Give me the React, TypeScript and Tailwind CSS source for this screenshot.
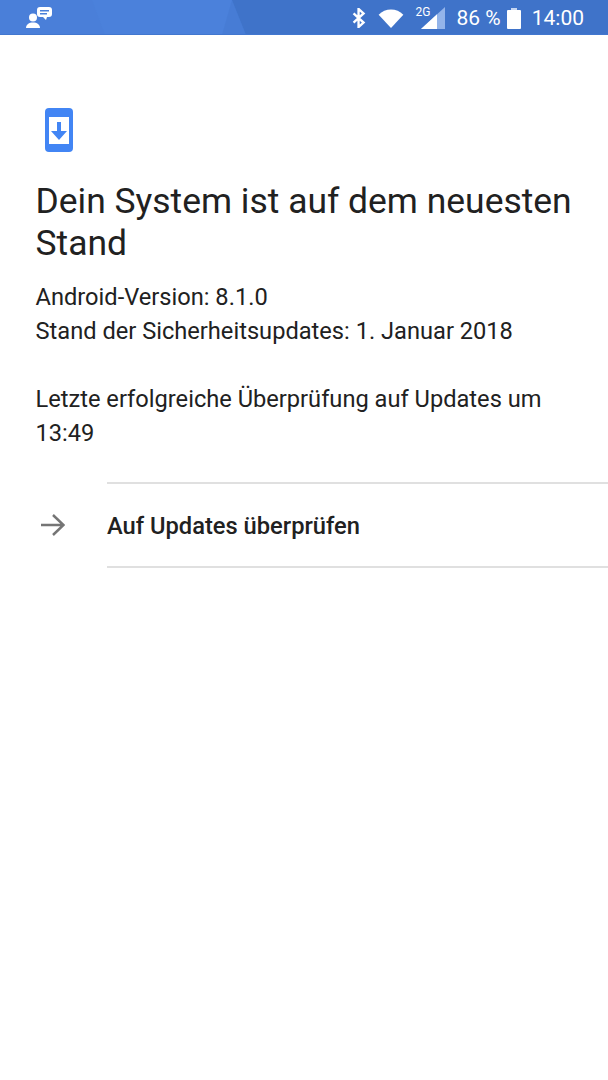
function StatusBar() {
  return (
    <div className="relative flex h-[35px] items-center justify-between overflow-hidden border-b border-[#4277cf] bg-[#4a80da] pl-[26px] pr-[24px]">
      {/* wallpaper facets behind the icons */}
      <svg className="absolute inset-0" width="608" height="35" viewBox="0 0 608 35">
        <polygon points="0,0 92,0 105,35 0,35" fill="#4a7fd9" />
        <polygon points="92,0 232,0 222,35 105,35" fill="#4b81db" />
        <polygon points="232,0 246,35 222,35" fill="#477cd5" />
        <polygon points="232,0 608,0 608,35 246,35" fill="#3f73c9" />
      </svg>
      <svg className="relative" width="26" height="21" viewBox="0 0 26 21" fill="white">
        <circle cx="7" cy="10.500" r="4" />
        <path d="M0 21c0-3.500 3-5.500 7-5.500s7 2 7 5.500z" />
        <path d="M14 0h9a3 3 0 0 1 3 3v4a3 3 0 0 1-3 3h-2l-1 3-3-3h-3a3 3 0 0 1-3-3V3a3 3 0 0 1 3-3z" />
        <rect x="14" y="3" width="9" height="1.500" fill="#4a80da" />
        <rect x="14" y="6" width="7" height="1.500" fill="#4a80da" />
      </svg>
      <div className="relative top-[1px] flex items-center font-['Roboto',sans-serif] text-white">
        <svg width="14" height="20" viewBox="0 0 14 22" fill="none" stroke="white" strokeWidth="2.600">
          <path d="M1 6l11 10-5.500 5V1L12 6 1 16" />
        </svg>
        <svg className="ml-[12px]" width="26" height="19" viewBox="0 0 26 20" fill="white">
          <path d="M0 6C3.500 2.500 8 .5 13 .5S22.500 2.500 26 6L13 20z" />
        </svg>
        <div className="relative ml-[12px] h-[22px] w-[29px]">
          <svg className="absolute bottom-0 right-0" width="24" height="22" viewBox="0 0 24 22">
            <polygon points="24,0 24,22 0,22" fill="#93b4ea" />
            <polygon points="16,7.300 16,22 0,22" fill="white" />
          </svg>
          <span className="absolute -top-[1px] left-0 text-[12px] leading-[13px]">2G</span>
        </div>
        <span className="ml-[12px] text-[21px] leading-none">86 %</span>
        <svg className="ml-[6px]" width="14" height="21" viewBox="0 0 14 21" fill="white">
          <rect x="0" y="2" width="14" height="19" rx="1" />
          <rect x="4" y="0" width="6" height="2" fill="#c6d6f2" />
        </svg>
        <span className="ml-[11px] text-[21px] leading-none">14:00</span>
      </div>
    </div>
  );
}

export default function App() {
  return (
    <div className="min-h-[1080px] w-[608px] bg-white font-['Roboto',sans-serif] text-[#212121]">
      <StatusBar />
      <div className="pl-[35.500px] pr-[30px] pt-[73px]">
        <svg className="ml-[9.500px] block" width="28" height="44" viewBox="0 0 28 44">
          <rect width="28" height="44" rx="4" fill="#4285f4" />
          <rect x="4" y="9" width="20" height="27" fill="white" />
          <path d="M12 14h4v9h6l-8 9-8-9h6z" fill="#4285f4" />
        </svg>
        <h1 className="mt-[28px] text-[35.450px] font-normal leading-[42px]">
          Dein System ist auf dem neuesten Stand
        </h1>
        <p className="mt-[16px] text-[23.650px] leading-[34px]">
          Android-Version: 8.1.0
          <br />
          Stand der Sicherheitsupdates: 1. Januar 2018
        </p>
        <p className="mt-[34px] text-[23.650px] leading-[34px]">
          Letzte erfolgreiche Überprüfung auf Updates um 13:49
        </p>
      </div>
      <div className="mt-[32px] flex">
        <div className="flex w-[107px] items-center pl-[41px]">
          <svg width="24" height="24" viewBox="0 0 24 24" fill="none" stroke="#757575" strokeWidth="2.500">
            <path d="M0 12h22M12 2l10.500 10L12 22" />
          </svg>
        </div>
        <div className="flex h-[86px] flex-1 items-center border-y-2 border-[#e0e0e0] pt-[3px] text-[23.700px] font-medium">
          Auf Updates überprüfen
        </div>
      </div>
    </div>
  );
}
